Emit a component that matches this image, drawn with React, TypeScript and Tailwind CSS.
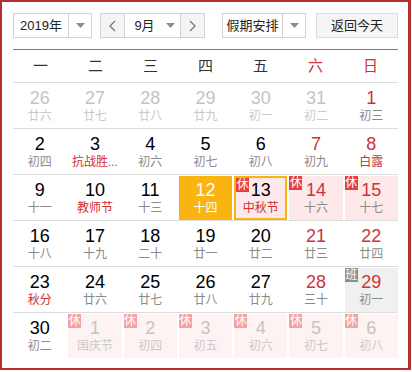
import type { ReactNode } from "react";

type Cell = {
  day: number;
  sub: string;
  kind?: "prev" | "next";
  weekend?: boolean;
  fest?: boolean;
  today?: boolean;
  selected?: boolean;
  badge?: "休" | "班";
};

const rows: Cell[][] = [
  [
    { day: 26, sub: "廿六", kind: "prev" },
    { day: 27, sub: "廿七", kind: "prev" },
    { day: 28, sub: "廿八", kind: "prev" },
    { day: 29, sub: "廿九", kind: "prev" },
    { day: 30, sub: "初一", kind: "prev" },
    { day: 31, sub: "初二", kind: "prev" },
    { day: 1, sub: "初三", weekend: true },
  ],
  [
    { day: 2, sub: "初四" },
    { day: 3, sub: "抗战胜...", fest: true },
    { day: 4, sub: "初六" },
    { day: 5, sub: "初七" },
    { day: 6, sub: "初八" },
    { day: 7, sub: "初九", weekend: true },
    { day: 8, sub: "白露", weekend: true, fest: true },
  ],
  [
    { day: 9, sub: "十一" },
    { day: 10, sub: "教师节", fest: true },
    { day: 11, sub: "十三" },
    { day: 12, sub: "十四", today: true },
    { day: 13, sub: "中秋节", fest: true, selected: true, badge: "休" },
    { day: 14, sub: "十六", weekend: true, badge: "休" },
    { day: 15, sub: "十七", weekend: true, badge: "休" },
  ],
  [
    { day: 16, sub: "十八" },
    { day: 17, sub: "十九" },
    { day: 18, sub: "二十" },
    { day: 19, sub: "廿一" },
    { day: 20, sub: "廿二" },
    { day: 21, sub: "廿三", weekend: true },
    { day: 22, sub: "廿四", weekend: true },
  ],
  [
    { day: 23, sub: "秋分", fest: true },
    { day: 24, sub: "廿六" },
    { day: 25, sub: "廿七" },
    { day: 26, sub: "廿八" },
    { day: 27, sub: "廿九" },
    { day: 28, sub: "三十", weekend: true },
    { day: 29, sub: "初一", weekend: true, badge: "班" },
  ],
  [
    { day: 30, sub: "初二" },
    { day: 1, sub: "国庆节", kind: "next", badge: "休" },
    { day: 2, sub: "初四", kind: "next", badge: "休" },
    { day: 3, sub: "初五", kind: "next", badge: "休" },
    { day: 4, sub: "初六", kind: "next", badge: "休" },
    { day: 5, sub: "初七", kind: "next", badge: "休" },
    { day: 6, sub: "初八", kind: "next", badge: "休" },
  ],
];

const weekdays = ["一", "二", "三", "四", "五", "六", "日"];

function Caret() {
  return (
    <svg width="9" height="5" viewBox="0 0 9 5">
      <path d="M0 0h9L4.5 5z" fill="#8c8c8c" />
    </svg>
  );
}

function Chevron({ dir }: { dir: "l" | "r" }) {
  return (
    <svg width="7" height="12" viewBox="0 0 7 12">
      <path d={dir === "l" ? "M6 1L1 6l5 5" : "M1 1l5 5-5 5"} fill="none" stroke="#777" strokeWidth="1.3" />
    </svg>
  );
}

function Select({ label, width }: { label: string; width: string }): ReactNode {
  return (
    <div className={`flex h-[25px] ${width} border border-[#d2d2d2] bg-white`}>
      <div className="flex flex-1 items-center justify-center text-[13px] text-[#222]">{label}</div>
      <div className="flex w-[23px] items-center justify-center border-l border-[#d2d2d2]">
        <Caret />
      </div>
    </div>
  );
}

function DayCell({ c }: { c: Cell }) {
  let bg = "bg-white";
  if (c.today) bg = "bg-[#fab412]";
  else if (c.badge === "休" && c.kind === "next") bg = "bg-[#fdf3f3]";
  else if (c.badge === "休") bg = "bg-[#fde9e9]";
  else if (c.badge === "班") bg = "bg-[#f0f0f0]";

  let numColor = "text-black";
  if (c.kind) numColor = "text-[#c4c4c4]";
  else if (c.today) numColor = "text-white";
  else if (c.weekend) numColor = "text-[#d0323b]";

  let subColor = "text-[#8a8a8a]";
  if (c.kind) subColor = "text-[#cacaca]";
  else if (c.today) subColor = "text-white";
  else if (c.fest) subColor = "text-[#cf2f36]";

  const border = c.selected ? "border-2 border-[#fab412]" : "";

  return (
    <div className={`relative flex h-[44px] flex-col items-center ${bg} ${border} ${c.selected ? "pt-[2px]" : "pt-[4px]"}`}>
      {c.badge && (
        <span
          className={`absolute left-0 top-0 flex h-[14px] w-[13px] items-center justify-center text-[12px] leading-none text-white ${
            c.badge === "班" ? "bg-[#8d8d8d]" : c.kind ? "bg-[#f3a3a3]" : "bg-[#e2413f]"
          } ${c.selected ? "-left-[2px] -top-[2px]" : ""}`}
        >
          {c.badge}
        </span>
      )}
      <span className={`text-[18px] leading-[20px] ${numColor}`}>{c.day}</span>
      <span className={`text-[12px] leading-[16px] ${subColor}`}>{c.sub}</span>
    </div>
  );
}

export default function App() {
  return (
    <div
      className="h-[371px] w-[412px] bg-white"
      style={{ fontFamily: '"Liberation Sans", "Noto Sans CJK SC", sans-serif' }}
    >
      <div className="h-[370px] w-[411px] border-2 border-r-[3px] border-[#b5302e] pl-[11px] pt-[11px]">
        <div className="w-[385px]">
          <div className="flex h-[25px] items-center">
            <Select label="2019年" width="w-[79px]" />
            <div className="ml-[8px] flex h-[25px] w-[105px] border border-[#d2d2d2]">
              <div className="flex w-[23px] items-center justify-center bg-[#f4f4f4]">
                <Chevron dir="l" />
              </div>
              <div className="flex flex-1 border-x border-[#d2d2d2] bg-white">
                <div className="flex flex-1 items-center justify-center pl-[4px] text-[13px] text-[#222]">9月</div>
                <div className="flex w-[20px] items-center justify-center">
                  <Caret />
                </div>
              </div>
              <div className="flex w-[23px] items-center justify-center bg-[#f4f4f4]">
                <Chevron dir="r" />
              </div>
            </div>
            <div className="ml-[17px]">
              <Select label="假期安排" width="w-[84px]" />
            </div>
            <div className="ml-[10px] flex h-[25px] w-[82px] items-center justify-center border border-[#dcdcdc] bg-[#f5f5f5] text-[13px] text-[#222]">
              返回今天
            </div>
          </div>

          <div className="mt-[11px] border-t border-[#cf5a55]" />
          <div className="grid h-[33px] grid-cols-7 items-center border-b border-[#dcdcdc]">
            {weekdays.map((w, i) => (
              <div key={w} className={`text-center text-[15px] ${i >= 5 ? "text-[#d0323b]" : "text-[#333]"}`}>
                {w}
              </div>
            ))}
          </div>

          {rows.map((row, r) => (
            <div key={r} className={`grid grid-cols-7 gap-x-[2px] pt-[1px] ${r < 5 ? "border-b border-[#dcdcdc]" : ""}`}>
              {row.map((c, i) => (
                <DayCell key={i} c={c} />
              ))}
            </div>
          ))}
        </div>
      </div>
    </div>
  );
}
